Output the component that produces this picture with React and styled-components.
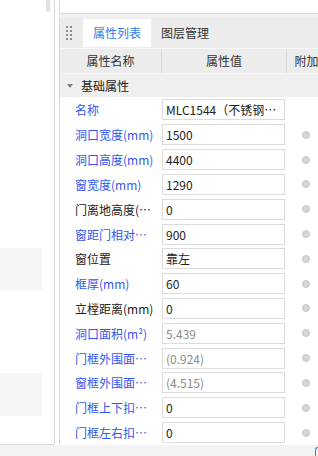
import React from 'react'
import styled, { createGlobalStyle } from 'styled-components'

const GlobalStyle = createGlobalStyle`
  html, body {
    margin: 0;
    padding: 0;
    background: #ffffff;
  }
  body {
    width: 318px;
    height: 456px;
    overflow: hidden;
    font-family: "Noto Sans CJK SC", "Noto Sans", "Liberation Sans", sans-serif;
    font-size: 12px;
    color: #333;
  }
  * {
    box-sizing: border-box;
  }
`

const Page = styled.div`
  display: flex;
  flex-direction: column;
  width: 318px;
  height: 456px;
`

const Main = styled.div`
  display: flex;
  height: 445px;
`

const LeftPanel = styled.div`
  position: relative;
  width: 55px;
  flex: none;
  border-right: 1px solid #d9d9d9;
  border-bottom: 1px solid #d9d9d9;
  display: flex;
  flex-direction: column;
`

const ScrollThumb = styled.div`
  position: absolute;
  top: 0;
  left: 46px;
  width: 4px;
  height: 12px;
  border-radius: 0 0 2px 2px;
  background: #e2e2e2;
`

const Block = styled.div`
  width: 42px;
  height: ${p => p.h}px;
  margin-top: ${p => p.top}px;
  background: #f5f6f8;
`

const RightColumn = styled.div`
  flex: 1;
  margin-left: 4px;
  display: flex;
  flex-direction: column;
  min-width: 0;
`

const TopPanel = styled.div`
  height: 14px;
  border-left: 1px solid #d9d9d9;
  border-bottom: 1px solid #d9d9d9;
  background: #fff;
`

const Spacer = styled.div`
  height: 4px;
  background: #f1f1f1;
`

const PropsPanel = styled.div`
  flex: 1;
  border-left: 1px solid #d9d9d9;
  overflow: hidden;
  display: flex;
  flex-direction: column;
`

const TabBar = styled.div`
  display: flex;
  align-items: stretch;
  height: 30px;
  background: #ececec;
  padding-top: 1px;
  padding-bottom: 1px;
`

const Handle = styled.div`
  width: 23px;
  display: grid;
  grid-template-columns: 2px 2px;
  grid-auto-rows: 2px;
  column-gap: 2px;
  row-gap: 2px;
  align-content: center;
  padding-left: 6px;

  span {
    background: #8a8a8a;
  }
`

const Tab = styled.div`
  display: flex;
  align-items: center;
  padding: 0 10px;
  background: ${p => (p.active ? '#ffffff' : 'transparent')};
  color: ${p => (p.active ? '#2f7cf0' : '#333')};
`

const Grid = styled.div`
  display: grid;
  grid-template-columns: 101px 125px 40px;
  width: 266px;
`

const HeaderRow = styled(Grid)`
  height: 25px;
  background: #ececec;
  border-top: 1px solid #f8f8f8;
`

const HeadCell = styled.div`
  display: flex;
  align-items: center;
  justify-content: center;
  white-space: nowrap;
  color: #333;
  border-left: ${p => (p.sep ? '1px solid #d8d8d8' : 'none')};
`

const GroupRow = styled.div`
  display: flex;
  align-items: center;
  height: 25px;
  background: #efefef;
  border-top: 1px solid #f7f7f7;
  padding-left: 7px;
  color: #222;
`

const Caret = styled.span`
  width: 0;
  height: 0;
  border-left: 3px solid transparent;
  border-right: 3px solid transparent;
  border-top: 4px solid #808080;
  margin-right: 8px;
`

const Row = styled(Grid)`
  height: 25px;
  align-items: center;
`

const Name = styled.div`
  padding-left: 15px;
  padding-right: 4px;
  white-space: nowrap;
  overflow: hidden;
  text-overflow: ellipsis;
  color: ${p => (p.link ? '#3556ee' : '#222')};
`

const Value = styled.div`
  height: 21px;
  width: 123px;
  margin-left: 1px;
  border: 1px solid #dcdcdc;
  background: #fff;
  padding: 0 3px;
  display: flex;
  align-items: center;
  white-space: nowrap;
  overflow: hidden;
  text-overflow: ellipsis;
  color: ${p => (p.muted ? '#8c8c8c' : '#222')};
`

const ValueText = styled.span`
  overflow: hidden;
  text-overflow: ellipsis;
`

const Radio = styled.div`
  justify-self: center;
  width: 8px;
  height: 8px;
  border-radius: 50%;
  background: #d6d6d6;
  border: 1px solid #c8c8c8;
`

const BottomStrip = styled.div`
  flex: 1;
  background: #f3f3f3;
  display: flex;
  justify-content: flex-end;
  overflow: hidden;
`

const EdgeMark = styled.span`
  width: 3px;
  margin-top: 2px;
  height: 9px;
  border-left: 1px solid #3a7cf0;
  border-top: 1px solid #3a7cf0;
  border-radius: 3px 0 0 0;
`

const rows = [
  { name: '名称', value: 'MLC1544（不锈钢门窗）', link: true },
  { name: '洞口宽度(mm)', value: '1500', link: true },
  { name: '洞口高度(mm)', value: '4400', link: true },
  { name: '窗宽度(mm)', value: '1290', link: true },
  { name: '门离地高度(mm)', value: '0' },
  { name: '窗距门相对高度', value: '900', link: true },
  { name: '窗位置', value: '靠左' },
  { name: '框厚(mm)', value: '60', link: true },
  { name: '立樘距离(mm)', value: '0' },
  { name: '洞口面积(m²)', value: '5.439', link: true, muted: true },
  { name: '门框外围面积(m²)', value: '(0.924)', link: true, muted: true },
  { name: '窗框外围面积(m²)', value: '(4.515)', link: true, muted: true },
  { name: '门框上下扣尺寸', value: '0', link: true },
  { name: '门框左右扣尺寸', value: '0', link: true },
]

export default function App() {
  return (
    <Page>
      <GlobalStyle />
      <Main>
        <LeftPanel>
          <ScrollThumb />
          <Block top={248} h={42} />
          <Block top={83} h={43} />
        </LeftPanel>
        <RightColumn>
          <TopPanel />
          <Spacer />
          <PropsPanel>
            <TabBar>
              <Handle>
                {Array.from({ length: 8 }).map((_, i) => <span key={i} />)}
              </Handle>
              <Tab active>属性列表</Tab>
              <Tab>图层管理</Tab>
            </TabBar>
            <HeaderRow>
              <HeadCell>属性名称</HeadCell>
              <HeadCell sep>属性值</HeadCell>
              <HeadCell sep>附加</HeadCell>
            </HeaderRow>
            <GroupRow>
              <Caret />
              基础属性
            </GroupRow>
            {rows.map(r => (
              <Row key={r.name}>
                <Name link={r.link}>{r.name}</Name>
                <Value muted={r.muted}>
                  <ValueText>{r.value}</ValueText>
                </Value>
                {r.name === '名称' ? <span /> : <Radio />}
              </Row>
            ))}
          </PropsPanel>
        </RightColumn>
      </Main>
      <BottomStrip>
        <EdgeMark />
      </BottomStrip>
    </Page>
  )
}
